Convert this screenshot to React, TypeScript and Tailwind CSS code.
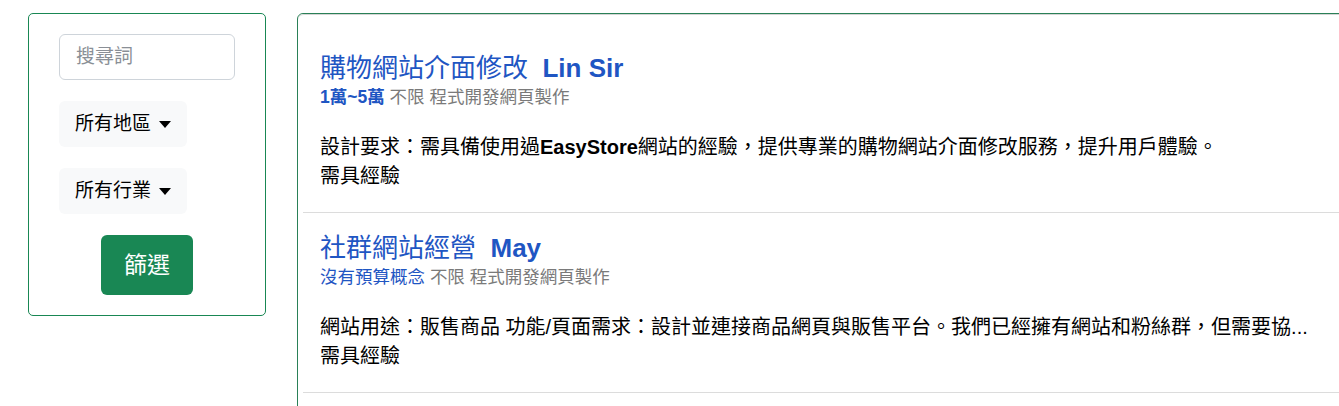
const font = { fontFamily: '"Liberation Sans", "Noto Sans CJK TC", sans-serif' };

interface Job {
  title: string;
  owner: string;
  budget: string;
  budgetBold?: boolean;
  region: string;
  category: string;
  desc: React.ReactNode;
  note: string;
}

const jobs: Job[] = [
  {
    title: '購物網站介面修改',
    owner: 'Lin Sir',
    budget: '1萬~5萬',
    budgetBold: true,
    region: '不限',
    category: '程式開發網頁製作',
    desc: (
      <>
        設計要求：需具備使用過<b>EasyStore</b>網站的經驗，提供專業的購物網站介面修改服務，提升用戶體驗。
      </>
    ),
    note: '需具經驗',
  },
  {
    title: '社群網站經營',
    owner: 'May',
    budget: '沒有預算概念',
    region: '不限',
    category: '程式開發網頁製作',
    desc: '網站用途：販售商品 功能/頁面需求：設計並連接商品網頁與販售平台。我們已經擁有網站和粉絲群，但需要協...',
    note: '需具經驗',
  },
];

function Dropdown({ label }: { label: string }) {
  return (
    <button className="self-start h-[46px] pl-4 pr-[16px] rounded-md bg-[#f8f9fa] text-[19px] text-black flex items-center gap-[8px]">
      {label}
      <span className="w-0 h-0 border-x-[6px] border-x-transparent border-t-[7px] border-t-black" />
    </button>
  );
}

export default function App() {
  return (
    <div className="w-[1339px] h-[406px] overflow-hidden bg-white flex items-start gap-[31px] pt-[13px] pl-[28px]" style={font}>
      <div className="w-[238px] shrink-0 border border-[#198754] rounded-[5px] px-[30px] pt-[20px] pb-[20px] flex flex-col gap-[21px]">
        <input
          placeholder="搜尋詞"
          className="h-[46px] w-full border border-[#ced4da] rounded-md px-4 text-[19px] placeholder:text-[#8a8f96] outline-none"
        />
        <Dropdown label="所有地區" />
        <Dropdown label="所有行業" />
        <button className="mx-auto w-[92px] h-[60px] rounded-md bg-[#198754] text-white text-[23px]">篩選</button>
      </div>

      <div className="w-[1100px] shrink-0 border border-[#2a8057] rounded-[6px] h-[420px]">
        <div className="border-t border-[#d5d5d5] rounded-t-[6px] pt-[18px] px-[5px] h-full">
          {jobs.map((job) => (
            <div key={job.title} className="border-b border-[#dcdcdc] pl-[17px] pt-[19px] pb-[21px]">
              <div className="text-[26px] leading-[32px] text-[#1f56c3] whitespace-nowrap">
                {job.title}
                {'\u00a0\u00a0'}
                <b>{job.owner}</b>
              </div>
              <div className="text-[17.5px] leading-[26px] text-[#7a7a7a] whitespace-nowrap">
                <span className={job.budgetBold ? 'text-[#1f56c3] font-bold' : 'text-[#1f56c3]'}>{job.budget}</span> {job.region} {job.category}
              </div>
              <div className="mt-[23px] text-[20px] leading-[29px] text-black whitespace-nowrap">
                <div>{job.desc}</div>
                <div>{job.note}</div>
              </div>
            </div>
          ))}
        </div>
      </div>
    </div>
  );
}
